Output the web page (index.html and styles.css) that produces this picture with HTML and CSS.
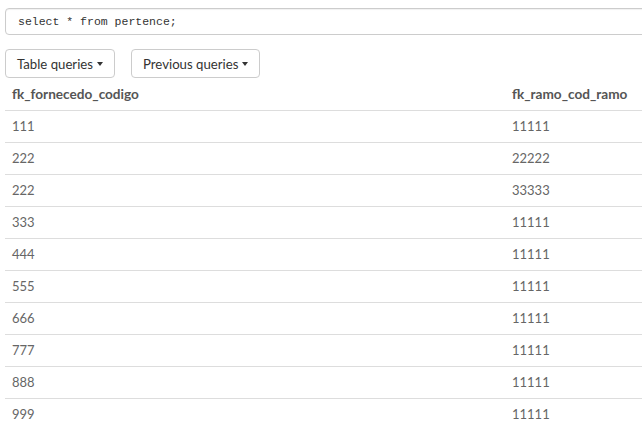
FILE: index.html
```html
<!DOCTYPE html>
<html>
<head>
<meta charset="utf-8">
<link rel="stylesheet" href="styles.css">
</head>
<body>
<div class="frame">
<div class="page">
  <div class="query">select * from pertence;</div>
  <div class="toolbar">
    <button class="btn">Table queries <span class="caret"></span></button>
    <button class="btn">Previous queries <span class="caret"></span></button>
  </div>
  <table class="results">
    <thead>
      <tr><th class="c1">fk_fornecedo_codigo</th><th>fk_ramo_cod_ramo</th></tr>
    </thead>
    <tbody>
      <tr><td>111</td><td>11111</td></tr>
      <tr><td>222</td><td>22222</td></tr>
      <tr><td>222</td><td>33333</td></tr>
      <tr><td>333</td><td>11111</td></tr>
      <tr><td>444</td><td>11111</td></tr>
      <tr><td>555</td><td>11111</td></tr>
      <tr><td>666</td><td>11111</td></tr>
      <tr><td>777</td><td>11111</td></tr>
      <tr><td>888</td><td>11111</td></tr>
      <tr><td>999</td><td>11111</td></tr>
    </tbody>
  </table>
</div>
</div>
</body>
</html>
```

FILE: styles.css
```css
html, body {
  margin: 0;
  padding: 0;
  background: #fff;
  overflow: hidden;
}
body {
  font-family: Lato, "Open Sans", sans-serif;
  font-size: 13px;
  color: #555;
}
.frame {
  width: 642px;
  height: 434px;
  overflow: hidden;
}
.page {
  padding: 8px 0 0 5px;
  width: 680px;
}
.query {
  box-sizing: border-box;
  height: 27px;
  border: 1px solid #ccc;
  border-radius: 4px;
  padding: 0 12px;
  line-height: 25px;
  font-family: "Liberation Mono", "DejaVu Sans Mono", monospace;
  font-size: 11.5px;
  color: #333;
  box-shadow: inset 0 1px 1px rgba(0,0,0,0.06);
}
.toolbar {
  display: flex;
  gap: 16px;
  margin-top: 14px;
}
.btn {
  box-sizing: border-box;
  height: 29px;
  padding: 0 11px;
  background: #fff;
  border: 1px solid #ccc;
  border-radius: 4px;
  font-family: Lato, "Open Sans", sans-serif;
  font-size: 13.2px;
  color: #333;
  display: flex;
  align-items: center;
  gap: 4px;
}
.caret {
  display: inline-block;
  width: 0;
  height: 0;
  border-top: 4px solid #333;
  border-left: 3.5px solid transparent;
  border-right: 3.5px solid transparent;
  margin-top: 1px;
}
.results {
  border-collapse: collapse;
  width: 675px;
  margin-top: 1px;
}
.results th, .results td {
  text-align: left;
  padding: 7px 7px;
  line-height: 17px;
  height: 17px;
}
.results th {
  font-weight: bold;
  font-size: 13.6px;
  color: #555;
  border-bottom: 1px solid #ddd;
}
.results th.c1 {
  width: 486px;
}
.results td {
  border-top: 1px solid #ddd;
  color: #666;
}
.results tbody tr:first-child td {
  border-top: none;
}
```
